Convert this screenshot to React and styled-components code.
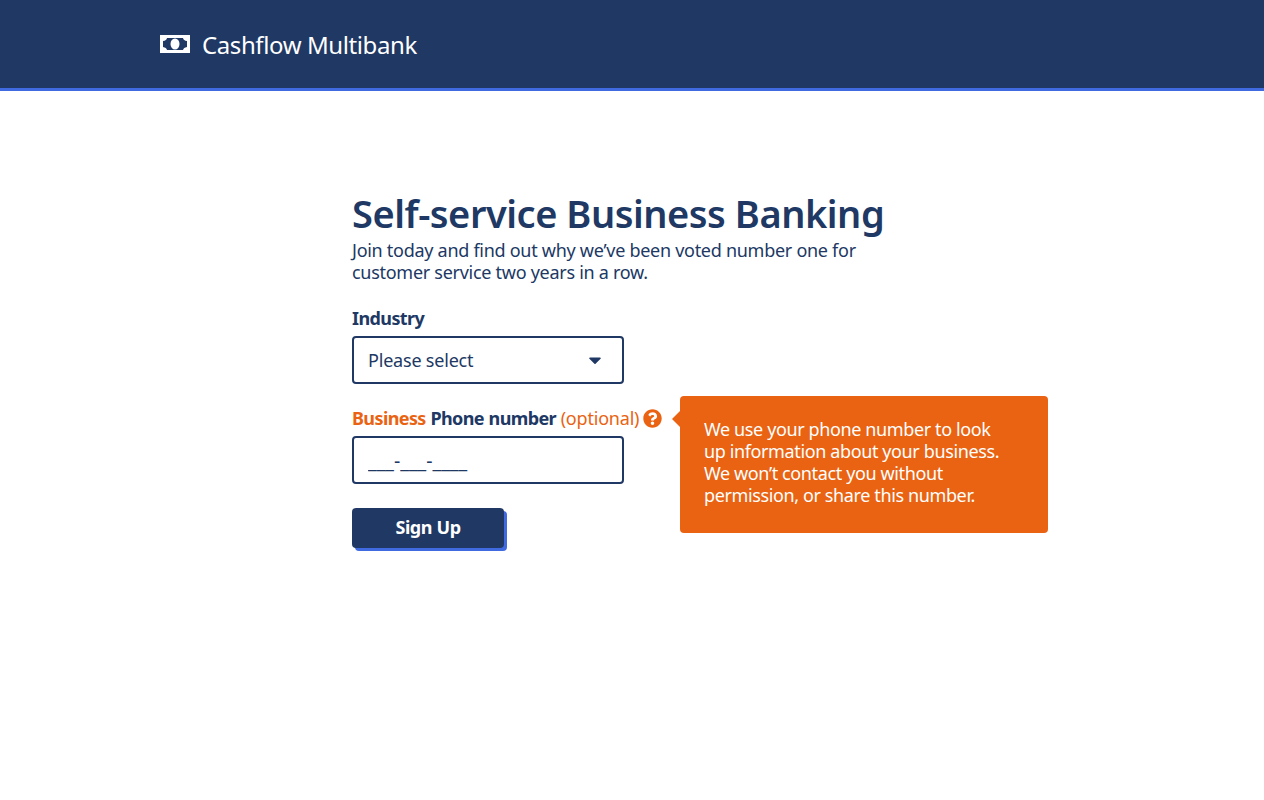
import styled, { createGlobalStyle } from "styled-components";
import { FaCaretDown, FaQuestionCircle } from "react-icons/fa";

const navy = "#203864";
const blue = "#3f6ae0";
const orange = "#ea6312";

function BillIcon() {
  return (
    <svg width="30" height="18" viewBox="0 0 30 18">
      <path
        fill="#fff"
        fillRule="evenodd"
        d="M0 0h30v18H0zM7 3Q6.500 5.500 3 6v6q3.500.5 4 3h16q.5-2.500 4-3V6q-3.500-.5-4-3z"
      />
      <ellipse cx="15" cy="9" rx="4.500" ry="5.500" fill="#fff" />
    </svg>
  );
}

export default function App() {
  return (
    <>
      <GlobalStyle />
      <Header>
        <BillIcon />
        <Brand>Cashflow Multibank</Brand>
      </Header>
      <Main>
        <Title>Self-service Business Banking</Title>
        <Intro>
          Join today and find out why we’ve been voted number one for
          <br />
          customer service two years in a row.
        </Intro>
        <Field>
          <Label>Industry</Label>
          <Select>
            <span>Please select</span>
            <FaCaretDown size={20} />
          </Select>
        </Field>
        <PhoneField>
          <Label>
            <Accent>Business</Accent> Phone number <Optional>(optional)</Optional>
            <HelpIcon size={19} />
          </Label>
          <Input defaultValue="___-___-____" />
          <Tooltip>
            We use your phone number to look
            <br />
            up information about your business.
            <br />
            We won’t contact you without
            <br />
            permission, or share this number.
          </Tooltip>
        </PhoneField>
        <Button>Sign Up</Button>
      </Main>
    </>
  );
}

const GlobalStyle = createGlobalStyle`
  body {
    margin: 0;
    background: #fff;
    color: ${navy};
    font-family: "Noto Sans", "Open Sans", sans-serif;
  }
`;

const Header = styled.header`
  display: flex;
  align-items: center;
  gap: 12px;
  height: 88px;
  padding-left: 160px;
  background: ${navy};
  border-bottom: 3px solid ${blue};
  color: #fff;
`;

const Brand = styled.div`
  font-size: 24px;
  letter-spacing: -0.4px;
`;

const Main = styled.main`
  width: 560px;
  margin-left: 352px;
  padding: 98px 0 120px;
`;

const Title = styled.h1`
  margin: 0;
  font-size: 38px;
  line-height: 48px;
  font-weight: 600;
  letter-spacing: -0.46px;
`;

const Intro = styled.p`
  margin: 2px 0 0;
  font-size: 18px;
  line-height: 22px;
  letter-spacing: -0.28px;
`;

const Field = styled.div`
  position: relative;
  margin-top: 23px;

  &:first-of-type {
    margin-top: 24px;
  }
`;

const PhoneField = styled(Field)``;

const Label = styled.div`
  height: 22px;
  margin-bottom: 7px;
  font-size: 18px;
  line-height: 22px;
  font-weight: 700;
  letter-spacing: -0.6px;
  word-spacing: 0.5px;
  white-space: pre;
`;

const Accent = styled.span`
  color: ${orange};
`;

const Optional = styled.span`
  color: ${orange};
  font-weight: 400;
  letter-spacing: -0.2px;
`;

const HelpIcon = styled(FaQuestionCircle)`
  margin-left: 4px;
  color: ${orange};
  vertical-align: -3px;
`;

const Select = styled.div`
  display: flex;
  align-items: center;
  justify-content: space-between;
  box-sizing: border-box;
  width: 272px;
  height: 48px;
  padding: 0 17px 0 14px;
  border: 2px solid ${navy};
  border-radius: 4px;
  font-size: 18px;
  letter-spacing: -0.2px;
`;

const Input = styled.input`
  display: block;
  box-sizing: border-box;
  width: 272px;
  height: 48px;
  padding: 0 14px;
  border: 2px solid ${navy};
  border-radius: 4px;
  outline: none;
  background: #fff;
  color: ${navy};
  font-family: inherit;
  font-size: 19.5px;
`;

const Tooltip = styled.div`
  position: absolute;
  top: -11px;
  left: 328px;
  box-sizing: border-box;
  width: 368px;
  height: 137px;
  padding: 22px 24px;
  border-radius: 4px;
  background: ${orange};
  color: #fff;
  font-size: 18px;
  line-height: 22px;
  letter-spacing: -0.38px;
  white-space: nowrap;

  &::before {
    content: "";
    position: absolute;
    top: 15px;
    left: -8px;
    border-style: solid;
    border-width: 8px 8px 8px 0;
    border-color: transparent ${orange} transparent transparent;
  }
`;

const Button = styled.button`
  display: block;
  width: 152px;
  height: 40px;
  margin-top: 24px;
  padding: 0 0 2px;
  border: 0;
  border-radius: 4px;
  background: ${navy};
  box-shadow: 3px 3px 0 ${blue};
  color: #fff;
  font-family: inherit;
  font-size: 18px;
  font-weight: 700;
  letter-spacing: -0.4px;
`;
